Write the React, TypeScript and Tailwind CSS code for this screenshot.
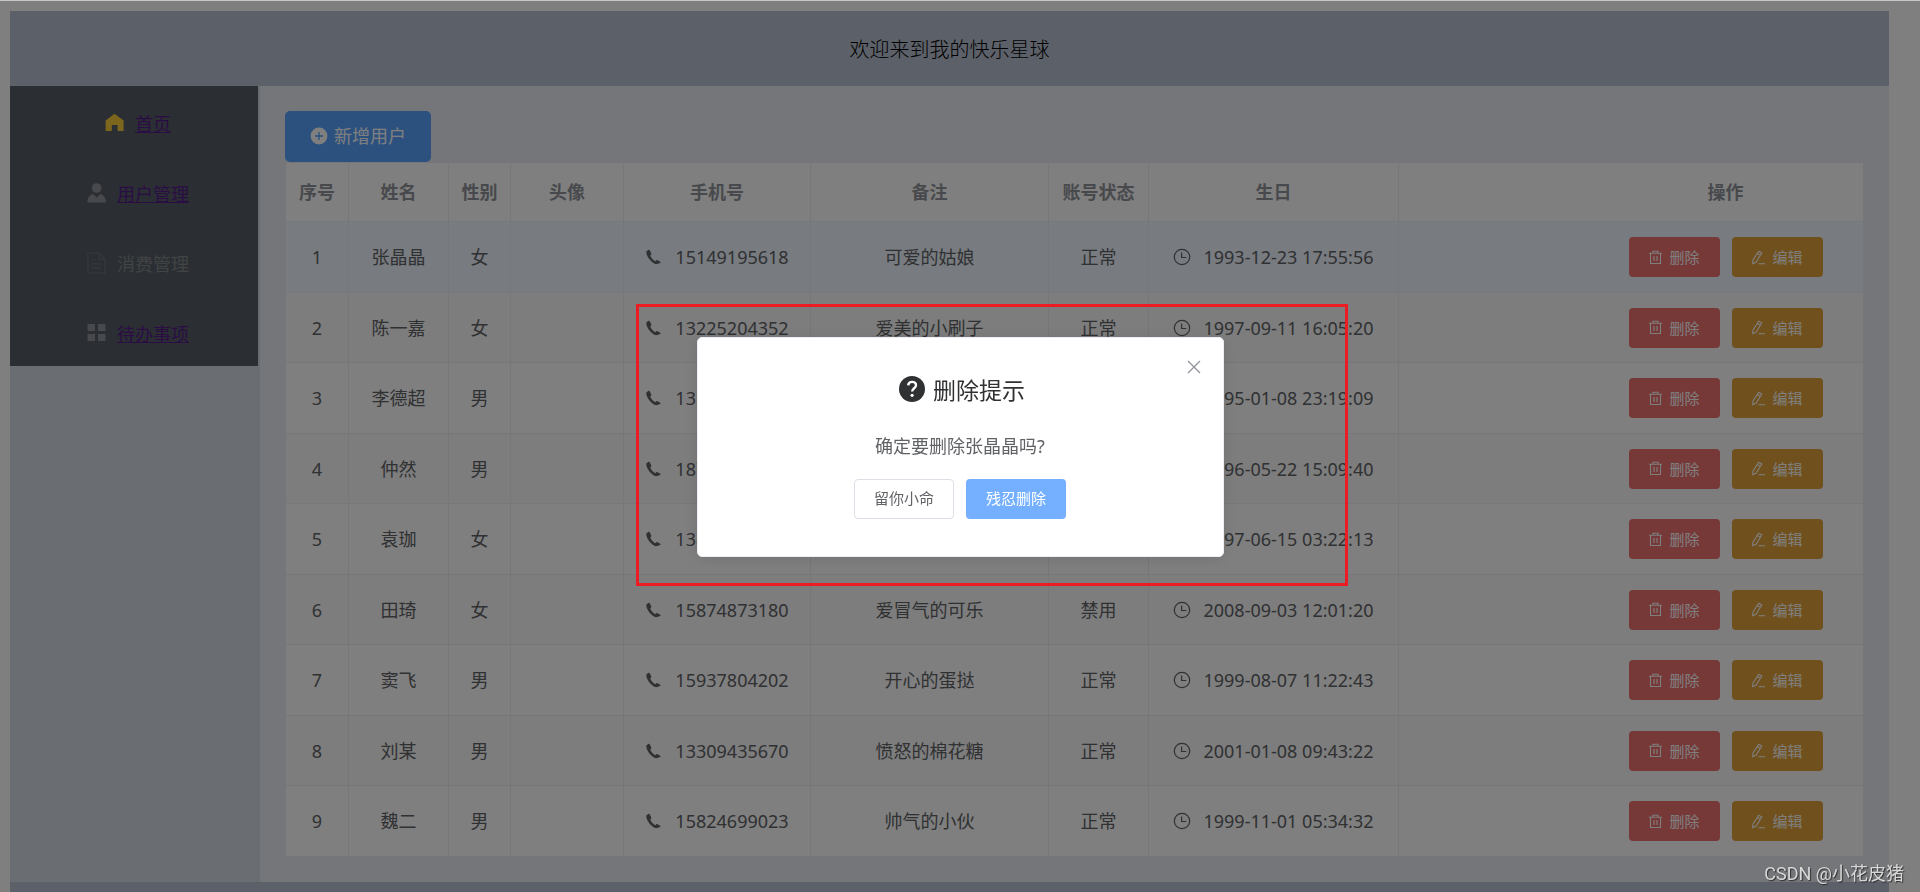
import type { ReactNode } from "react";

type User = {
  name: string;
  sex: string;
  phone: string;
  note: string;
  status: string;
  birthday: string;
};

const users: User[] = [
  { name: "张晶晶", sex: "女", phone: "15149195618", note: "可爱的姑娘", status: "正常", birthday: "1993-12-23 17:55:56" },
  { name: "陈一嘉", sex: "女", phone: "13225204352", note: "爱美的小刷子", status: "正常", birthday: "1997-09-11 16:05:20" },
  { name: "李德超", sex: "男", phone: "13598761204", note: "爱笑的男孩", status: "正常", birthday: "1995-01-08 23:19:09" },
  { name: "仲然", sex: "男", phone: "18736052418", note: "安静的书生", status: "正常", birthday: "1996-05-22 15:09:40" },
  { name: "袁珈", sex: "女", phone: "13837460925", note: "甜甜的布丁", status: "正常", birthday: "1997-06-15 03:22:13" },
  { name: "田琦", sex: "女", phone: "15874873180", note: "爱冒气的可乐", status: "禁用", birthday: "2008-09-03 12:01:20" },
  { name: "窦飞", sex: "男", phone: "15937804202", note: "开心的蛋挞", status: "正常", birthday: "1999-08-07 11:22:43" },
  { name: "刘某", sex: "男", phone: "13309435670", note: "愤怒的棉花糖", status: "正常", birthday: "2001-01-08 09:43:22" },
  { name: "魏二", sex: "男", phone: "15824699023", note: "帅气的小伙", status: "正常", birthday: "1999-11-01 05:34:32" },
];

const HomeIcon = () => (
  <svg viewBox="0 0 20 20" className="size-5 shrink-0 fill-[#f8ca38]" aria-hidden="true">
    <path d="M9.500.8 18.600 7.500V18h-6v-6H6.800v6H.6V7.500Z" />
  </svg>
);
const UserIcon = () => (
  <svg viewBox="0 0 20 20" className="size-5 shrink-0 fill-[#909399]" aria-hidden="true">
    <circle cx="9.700" cy="5" r="4.800" />
    <path d="M.3 19.500c.2-4.600 2.400-7.500 5.800-8.500l3.600 3.600 3.600-3.600c3.400 1 5.600 3.900 5.800 8.500Z" />
  </svg>
);
const DocumentIcon = () => (
  <svg viewBox="0 0 20 22" className="h-[22px] w-5 shrink-0 fill-none stroke-[#6b7077] stroke-[1.3]" aria-hidden="true">
    <path d="M1 1.200h11l5.800 5.600v14H1ZM11.800 1.400V7h5.800M4.500 7.600h4M4.500 11.800h9.500M4.500 16h9.500" />
  </svg>
);
const GridIcon = () => (
  <svg viewBox="0 0 20 20" className="size-5 shrink-0 fill-[#909399]" aria-hidden="true">
    <path d="M.5 1H8v7H.5ZM11 1h7.500v7H11ZM.5 11H8v7H.5ZM11 11h7.500v7H11Z" />
  </svg>
);
const PlusIcon = () => (
  <svg viewBox="0 0 18 18" className="size-[18px] shrink-0" aria-hidden="true">
    <circle cx="9" cy="9" r="8.400" className="fill-white" />
    <path d="M9 5v8M5 9h8" className="stroke-[#509ffd] stroke-[1.3]" />
  </svg>
);
const PhoneIcon = () => (
  <svg viewBox="0 0 16 16" className="size-4 shrink-0 fill-[#606266]" aria-hidden="true">
    <path d="M3.200 1 1.300 2.400c-.6 4.400 5.200 11.700 9.900 12.900l4-1.200c.5-.4.500-.9 0-1.300l-2.600-1.500c-.5-.3-1-.3-1.400.1l-.9.900C8.500 11.300 6 8.700 5.300 6.700l.8-1.100c.3-.4.300-.8.1-1.300L4.700 1.300C4.300.7 3.700.600 3.200 1Z" />
  </svg>
);
const ClockIcon = () => (
  <svg viewBox="0 0 18 18" className="size-[18px] shrink-0 fill-none stroke-[#606266] stroke-[1.2]" aria-hidden="true">
    <circle cx="9" cy="9" r="7.700" />
    <path d="M8.600 4.500v5h4.700" />
  </svg>
);
const TrashIcon = () => (
  <svg viewBox="0 0 15 15" className="size-[15px] shrink-0 fill-none stroke-white stroke-[1.1]" aria-hidden="true">
    <path d="M1 3.300h13M5 3V1.200h5V3M2.500 3.500v10h10v-10M6 6v5M9 6v5" />
  </svg>
);
const EditIcon = () => (
  <svg viewBox="0 0 15 15" className="size-[15px] shrink-0 fill-none stroke-white stroke-[1.1]" aria-hidden="true">
    <path d="M7.700 1.200 10.800 3 5 12.300l-3.300 1.300.2-3.500ZM6.300 3.500 9.300 5.300M7.500 13.700H14" />
  </svg>
);
const QuestionIcon = () => (
  <svg viewBox="0 0 26 26" className="size-[26px] shrink-0" aria-hidden="true">
    <circle cx="13" cy="13" r="13" className="fill-[#303133]" />
    <path d="M9.200 9.400c.2-2.400 1.700-3.500 3.900-3.500 2.300 0 3.900 1.300 3.900 3.400 0 2.900-3.900 3.100-3.900 6.300" className="fill-none stroke-white stroke-[2.4]" />
    <circle cx="13.100" cy="19.300" r="1.600" className="fill-white" />
  </svg>
);

const headCell = "h-[59px] border-r border-b border-[#ebeef5] p-0 text-center font-bold";
const bodyCell = "border-r border-b border-[#ebeef5] p-0 text-center";

const menu: { label: string; icon: ReactNode; link: boolean }[] = [
  { label: "首页", icon: <HomeIcon />, link: true },
  { label: "用户管理", icon: <UserIcon />, link: true },
  { label: "消费管理", icon: <DocumentIcon />, link: false },
  { label: "待办事项", icon: <GridIcon />, link: true },
];

function Sidebar() {
  return (
    <aside className="w-[250px] shrink-0 bg-[#d4dae2] pr-0.5">
      <nav>
        <ul className="bg-[#565d65]">
          {menu.map((item) => (
            <li key={item.label} className="flex h-[70px] items-center justify-center gap-2.5 pt-1 pl-2">
              {item.icon}
              {item.link ? (
                <a href="#" className="pt-0.5 text-[#551a8b] underline">{item.label}</a>
              ) : (
                <span className="pt-0.5 text-[#82868b]">{item.label}</span>
              )}
            </li>
          ))}
        </ul>
      </nav>
    </aside>
  );
}

function UserTable() {
  return (
    <table className="w-full table-fixed border-separate border-spacing-0 bg-white text-[#606266]">
      <colgroup>
        <col className="w-[63px]" />
        <col className="w-[100px]" />
        <col className="w-[62px]" />
        <col className="w-[113px]" />
        <col className="w-[187px]" />
        <col className="w-[238px]" />
        <col className="w-[100px]" />
        <col className="w-[250px]" />
        <col />
        <col className="w-[275px]" />
      </colgroup>
      <thead className="text-[#909399]">
        <tr>
          {["序号", "姓名", "性别", "头像", "手机号", "备注", "账号状态", "生日"].map((h) => (
            <th key={h} scope="col" className={headCell}>{h}</th>
          ))}
          <td className="border-b border-[#ebeef5]" />
          <th scope="col" className="border-b border-[#ebeef5] p-0 text-center font-bold">操作</th>
        </tr>
      </thead>
      <tbody>
        {users.map((u, i) => (
          <tr key={u.phone} className="h-[71px] first:bg-[#f0f7ff] even:h-[70px] even:bg-[#fafafa]">
            <td className={bodyCell}>{i + 1}</td>
            <td className={bodyCell}>{u.name}</td>
            <td className={bodyCell}>{u.sex}</td>
            <td className={bodyCell} />
            <td className={bodyCell}>
              <span className="flex items-center justify-center gap-3.5"><PhoneIcon />{u.phone}</span>
            </td>
            <td className={bodyCell}>{u.note}</td>
            <td className={bodyCell}>{u.status}</td>
            <td className={bodyCell}>
              <span className="flex items-center justify-center gap-3"><ClockIcon />{u.birthday}</span>
            </td>
            <td className="border-b border-[#ebeef5]" />
            <td className="border-b border-[#ebeef5] p-0">
              <div className="flex justify-center gap-3 text-[15px] leading-5 text-white">
                <button type="button" className="flex h-10 w-[91px] items-center justify-center gap-1.5 rounded bg-[#ef7071]"><TrashIcon />删除</button>
                <button type="button" className="flex h-10 w-[91px] items-center justify-center gap-1.5 rounded bg-[#e0a038]"><EditIcon />编辑</button>
              </div>
            </td>
          </tr>
        ))}
      </tbody>
    </table>
  );
}

function DeleteDialog() {
  return (
    <div role="dialog" aria-modal="true" aria-labelledby="dialog-title" className="relative flex w-[527px] flex-col items-center rounded-[5px] border border-[#ebeef5] bg-white pt-9 pb-[37px] shadow-[0_2px_15px_rgba(0,0,0,0.1)]">
      <button type="button" aria-label="关闭" className="absolute top-[21px] right-[21px]">
        <svg viewBox="0 0 16 16" className="size-4 fill-none stroke-[#909399] stroke-[1.3]" aria-hidden="true">
          <path d="m2 2 12 12M14 2 2 14" />
        </svg>
      </button>
      <h2 id="dialog-title" className="flex items-center gap-2 pl-1 text-[23px] leading-8 text-[#303133]"><span className="pb-0.5"><QuestionIcon /></span>删除提示</h2>
      <p className="mt-6 leading-8 text-[#606266]">确定要删除张晶晶吗?</p>
      <div className="mt-[17px] flex gap-3 text-[15px] leading-5">
        <button type="button" className="h-10 w-[100px] rounded border border-[#dcdfe6] bg-white pb-0.5 text-[#606266]">留你小命</button>
        <button type="button" className="h-10 w-[100px] rounded bg-[#74b0ff] pb-0.5 text-white">残忍删除</button>
      </div>
    </div>
  );
}

export default function App() {
  return (
    <div className="h-screen overflow-hidden bg-white font-['Noto_Sans','Noto_Sans_CJK_SC',sans-serif] text-[18px] leading-6 font-normal">
      <div className="pt-[11px] pr-[31px] pl-2.5">
        <header className="flex h-[75px] items-center justify-center bg-[#b9c0d0] pt-0.5 text-[20px] font-light text-black">欢迎来到我的快乐星球</header>
        <div className="flex">
          <Sidebar />
          <main className="min-w-0 flex-1 bg-[#ebecf3] pt-[25px] pr-[26px] pb-[25px] pl-[25px]">
            <button type="button" className="flex h-[51px] w-[146px] items-center justify-center gap-1.5 rounded-[5px] bg-[#58a2ff] pb-0.5 text-white"><PlusIcon />新增用户</button>
            <div className="mt-px pl-px"><UserTable /></div>
          </main>
        </div>
        <footer className="h-[75px] bg-[#b9c0d0]" />
      </div>
      <div className="fixed inset-0 flex items-center justify-center border-t border-[#c8c8c8] bg-black/50 bg-clip-padding">
        <DeleteDialog />
      </div>
      <div className="pointer-events-none fixed top-[304px] left-1/2 h-[282px] w-[712px] -translate-x-[324px] border-3 border-[#ed1c24]" />
      <p className="fixed right-4 bottom-1.5 font-['Roboto','Noto_Sans_CJK_SC',sans-serif] text-[#d8d8d8] [text-shadow:1px_1px_1px_rgba(0,0,0,0.6)]">CSDN @小花皮猪</p>
    </div>
  );
}
